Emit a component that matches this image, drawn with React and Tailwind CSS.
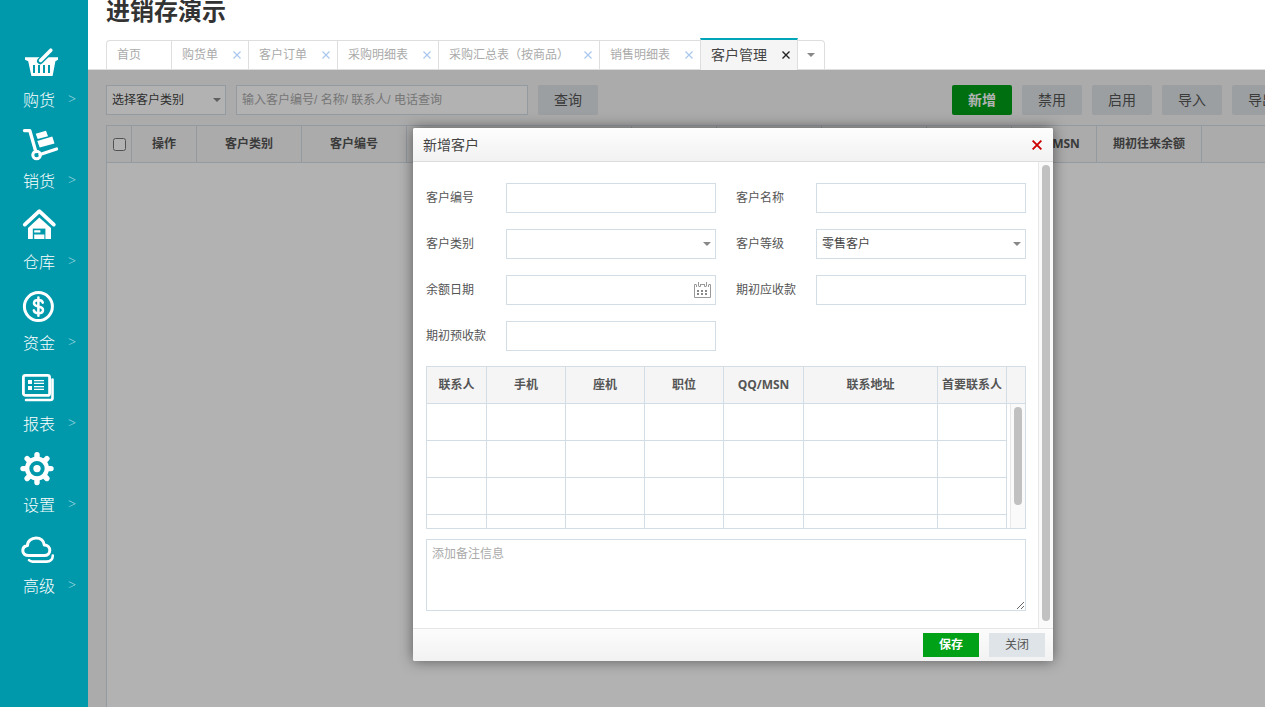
import React, { useState } from "react";

const menus = [
  { name: "购货", icon: "basket" },
  { name: "销货", icon: "trolley" },
  { name: "仓库", icon: "house" },
  { name: "资金", icon: "money" },
  { name: "报表", icon: "report" },
  { name: "设置", icon: "gear" },
  { name: "高级", icon: "cloud" },
];

const tabs = ["购货单", "客户订单", "采购明细表", "采购汇总表（按商品）", "销售明细表"];

const contactColumns = [
  { title: "联系人", width: "w-[60px]" },
  { title: "手机", width: "w-[79px]" },
  { title: "座机", width: "w-[79px]" },
  { title: "职位", width: "w-[79px]" },
  { title: "QQ/MSN", width: "w-[80px]" },
  { title: "联系地址", width: "w-[134px]" },
  { title: "首要联系人", width: "w-[69px]" },
];

const customerColumns = [
  { title: "操作", width: "w-[65px]" },
  { title: "客户类别", width: "w-[105px]" },
  { title: "客户编号", width: "w-[105px]" },
  { title: "", width: "w-[225px]" },
  { title: "", width: "w-[85px]" },
  { title: "", width: "w-[105px]" },
  { title: "", width: "w-[105px]" },
  { title: "", width: "w-[85px]" },
  { title: "QQ/MSN", width: "w-[85px]" },
  { title: "期初往来余额", width: "w-[105px]" },
];

const icons = {
  basket: (
    <>
      <path d="M5 12.300h33v2.400l-2.600 1.600L32.600 31H11.400L8.200 16.300 5 14.700z" fill="#fff" />
      <path d="M14 20v8M19 20v8M24 20v8M29 20v8" stroke="#0099ab" strokeWidth="2" />
      <path d="M31 5.200 20.200 16" stroke="#0099ab" strokeWidth="6.400" strokeLinecap="round" />
      <path d="M30.800 5.200 20.600 15.400" stroke="#fff" strokeWidth="3.600" strokeLinecap="round" />
    </>
  ),
  trolley: (
    <>
      <path d="M4.500 4.600h5.300l6 21" stroke="#fff" strokeWidth="3.400" strokeLinecap="round" strokeLinejoin="round" />
      <path d="M20 28.400 36.600 23" stroke="#fff" strokeWidth="3.200" strokeLinecap="round" />
      <circle cx="16.600" cy="29" r="3.800" stroke="#fff" strokeWidth="3" />
      <path d="m15.700 7.800 10.300-3 2 5.400-10.300 2.700zM17.300 15l15-4.600 2.200 7.200-14.800 4z" fill="#fff" />
    </>
  ),
  house: (
    <>
      <path d="M19.300 10.600 31 21V32H8V21z" fill="#fff" />
      <path d="M4.800 17.600 19.300 4.200 33.800 17.600" stroke="#fff" strokeWidth="3.800" strokeLinecap="round" strokeLinejoin="round" />
      <path d="M12.800 21.600h12.600V32H12.800z" fill="#0099ab" />
      <path d="M14.200 23.200h6.200v2.400h-6.200zM14.200 27.600h10.200V32H14.200z" fill="#fff" />
    </>
  ),
  money: (
    <>
      <circle cx="18.400" cy="18.600" r="14" stroke="#fff" strokeWidth="3" />
      <path
        d="M22.800 14.600c-.5-1.700-2.200-2.500-4.400-2.500-2.600 0-4.400 1.100-4.400 3.200 0 4.500 9 2 9 6.600 0 2.100-1.900 3.300-4.600 3.300-2.400 0-4.100-1-4.600-2.800M18.400 9.600v18.200"
        stroke="#fff"
        strokeWidth="2.500"
        strokeLinecap="round"
      />
    </>
  ),
  report: (
    <>
      <rect x="3.400" y="6.400" width="26.200" height="20" rx="2" stroke="#fff" strokeWidth="2.800" />
      <path d="M6 31h24.500c1.300 0 2-.7 2-2V10.600" stroke="#fff" strokeWidth="2.600" strokeLinecap="round" />
      <path d="M8 11h4v4H8zM8 17h4v4H8z" fill="#fff" />
      <path d="M14 11.600h10M14 14.400h10M14 17.600h10M14 20.400h10" stroke="#fff" strokeWidth="1.200" />
    </>
  ),
  gear: (
    <>
      <path d="M17 4.600v28M3 18.600h28M7.100 8.700l19.800 19.800M26.900 8.700 7.100 28.500" stroke="#fff" strokeWidth="5.400" strokeLinecap="round" />
      <circle cx="17" cy="18.600" r="12" fill="#fff" />
      <circle cx="17" cy="18.600" r="5.700" stroke="#0099ab" strokeWidth="4" />
    </>
  ),
  cloud: (
    <>
      <path
        d="M8.600 24.600C5.200 24.600 2.800 22.600 2.800 19.700c0-2.800 2-4.700 4.700-5.100C7.300 10.200 11.500 6.900 16 6.900c4.600 0 7.900 3 8.300 7.100 3.200 0 5.500 2.200 5.500 5.300s-2.300 5.300-5.500 5.300z"
        stroke="#fff"
        strokeWidth="3"
        strokeLinejoin="round"
      />
      <path d="M9 29.200c1 1 2 1.400 3.500 1.400h14c3.800 0 6.300-2.300 6.300-6.100" stroke="#fff" strokeWidth="2.600" strokeLinecap="round" />
    </>
  ),
};

const Cross = ({ size = 8, width = 1.2 }) => (
  <svg width={size} height={size} viewBox="0 0 8 8" fill="none" stroke="currentColor" strokeWidth={width}>
    <path d="M.5.5l7 7M7.500.500l-7 7" />
  </svg>
);

const Arrow = () => (
  <svg width="8" height="4" viewBox="0 0 8 4" fill="currentColor">
    <path d="M0 0h8L4 4z" />
  </svg>
);

const Scrollbar = ({ thumb }) => (
  <div className="w-[15px] shrink-0 border-l border-[#e8e8e8] bg-[#fafafa] pt-[3px] pl-[3px]">
    <div className={`w-2 rounded-full bg-[#c1c1c1] ${thumb}`}></div>
  </div>
);

const Field = ({ id, label, children }) => (
  <div className="flex">
    <label htmlFor={id} className="w-20 shrink-0 leading-[30px] text-[#555]">
      {label}
    </label>
    <div className="relative min-w-0 flex-1">
      {children || <input id={id} type="text" className="block h-[30px] w-full border border-[#d3dde6] px-[5px] outline-none" />}
    </div>
  </div>
);

const Select = ({ id, label, options }) => (
  <>
    <select id={id} aria-label={label} className="block h-[30px] w-full appearance-none border border-[#d3dde6] bg-white px-[5px] text-[#444] outline-none">
      {options.map((option) => (
        <option key={option}>{option}</option>
      ))}
    </select>
    <span className="pointer-events-none absolute top-[13px] right-[5px] text-[#888]">
      <Arrow />
    </span>
  </>
);

const Sidebar = () => (
  <nav className="w-[88px] shrink-0 bg-[#0099ab] pt-[45px] font-['Noto_Sans_CJK_SC',sans-serif] text-white">
    {menus.map((menu) => (
      <a key={menu.name} href="#" className="block h-[81px] pl-5">
        <svg className="block" width="40" height="36" viewBox="0 0 40 36" fill="none">
          {icons[menu.icon]}
        </svg>
        <span className="flex items-center pt-[6px] pl-[3px] text-base leading-6 font-light">
          {menu.name}
          <span className="ml-[13px] font-['Open_Sans',sans-serif] text-sm text-[#a5dbe2]">&gt;</span>
        </span>
      </a>
    ))}
  </nav>
);

const TabBar = () => (
  <div className="flex items-end border-b border-[#dedede] px-[18px] text-xs text-[#aaa]">
    <button className="h-[29px] w-[65px] rounded-tl-sm border-t border-l border-[#dedede] pl-[10px] text-left">首页</button>
    {tabs.map((tab) => (
      <div key={tab} className="flex h-[29px] items-center border-t border-l border-[#dedede] pr-[7px] pl-[10px]">
        <button className="whitespace-nowrap">{tab}</button>
        <button aria-label="关闭标签" className="ml-[15px] text-[#a9c8ee]">
          <Cross />
        </button>
      </div>
    ))}
    <div className="-mb-px flex h-8 items-center border-x border-t-2 border-x-[#dedede] border-t-[#00a5ba] bg-[#f5f5f5] pr-[7px] pl-[10px] text-sm text-[#444]">
      <button className="whitespace-nowrap">客户管理</button>
      <button aria-label="关闭标签" className="ml-[15px] text-[#222]">
        <Cross width={1.4} />
      </button>
    </div>
    <button aria-label="更多标签" className="flex h-[29px] w-[27px] items-center justify-center rounded-tr-sm border-t border-r border-[#dedede] text-[#888]">
      <Arrow />
    </button>
  </div>
);

const CustomerList = () => (
  <div className="flex flex-1 flex-col px-[18px] pt-[15px]">
    <div className="flex min-w-[1186px] justify-between text-sm">
      <div className="flex gap-[10px]">
        <div className="relative w-[120px] text-xs">
          <Select id="filter" label="客户类别筛选" options={["选择客户类别"]} />
        </div>
        <input
          type="text"
          aria-label="查询条件"
          placeholder="输入客户编号/ 名称/ 联系人/ 电话查询"
          className="h-[30px] w-[292px] border border-[#d3dde6] bg-white px-[5px] text-xs outline-none placeholder:text-[#aaa]"
        />
        <button className="h-[30px] w-[60px] rounded-xs bg-[#dfe4e8] text-[#555]">查询</button>
      </div>
      <div className="flex gap-[10px] text-[#555]">
        <button className="h-[30px] w-[60px] rounded-xs bg-[#00a017] font-bold text-white">新增</button>
        <button className="h-[30px] w-[60px] rounded-xs bg-[#dfe4e8]">禁用</button>
        <button className="h-[30px] w-[60px] rounded-xs bg-[#dfe4e8]">启用</button>
        <button className="h-[30px] w-[60px] rounded-xs bg-[#dfe4e8]">导入</button>
        <button className="h-[30px] w-[60px] rounded-xs bg-[#dfe4e8]">导出</button>
      </div>
    </div>
    <div className="mt-[10px] min-w-[1186px] flex-1 border-l border-[#d3dde6] bg-white">
      <table className="w-full table-fixed border-separate border-spacing-0 font-['Open_Sans','Noto_Sans_CJK_SC',sans-serif] text-[#555]">
        <thead>
          <tr className="h-[38px] bg-[#f5f5f5]">
            <th className="w-[25px] border-y border-r border-[#d3dde6]">
              <input type="checkbox" aria-label="全选" className="mx-auto block size-[13px]" />
            </th>
            {customerColumns.map((column, i) => (
              <th key={i} className={`border-y border-r border-[#d3dde6] ${column.width}`}>
                {column.title}
              </th>
            ))}
            <th className="border-y border-[#d3dde6]"></th>
          </tr>
        </thead>
      </table>
    </div>
  </div>
);

const ContactTable = () => (
  <div className="mt-[15px] border border-[#d3dde6]">
    <table className="w-full table-fixed border-separate border-spacing-0 font-['Open_Sans','Noto_Sans_CJK_SC',sans-serif] text-[#555]">
      <thead>
        <tr className="h-[37px] bg-[#f5f5f5]">
          {contactColumns.map((column) => (
            <th key={column.title} className={`border-r border-b border-[#d3dde6] whitespace-nowrap ${column.width}`}>
              {column.title}
            </th>
          ))}
          <th className="border-b border-[#d3dde6]"></th>
        </tr>
      </thead>
    </table>
    <div className="flex h-[124px] justify-between overflow-hidden">
      <table className="w-[580px] shrink-0 table-fixed border-separate border-spacing-0">
        <tbody>
          {[1, 2, 3, 4].map((row) => (
            <tr key={row} className="h-[37px]">
              {contactColumns.map((column) => (
                <td key={column.title} className={`border-r border-b border-[#d3dde6] ${column.width}`}></td>
              ))}
            </tr>
          ))}
        </tbody>
      </table>
      <Scrollbar thumb="h-[98px]" />
    </div>
  </div>
);

const CustomerDialog = ({ onClose }) => (
  <div role="dialog" aria-labelledby="dialog-title" className="w-[640px] overflow-hidden rounded-xs bg-white shadow-[0_0_14px_rgba(0,0,0,0.5)]">
    <div className="flex h-[34px] items-center justify-between border-b border-[#dcdcdc] bg-linear-to-b from-[#fdfdfd] to-[#f2f2f2] pt-px pr-[11px] pl-[10px]">
      <h2 id="dialog-title" className="text-sm text-[#444]">新增客户</h2>
      <button aria-label="关闭窗口" onClick={onClose} className="text-[#cc0000]">
        <Cross size={10} width={1.5} />
      </button>
    </div>
    <div className="flex">
      <form className="min-w-0 flex-1 pt-[21px] pr-3 pb-[17px] pl-[13px]">
        <div className="grid grid-cols-2 gap-x-5 gap-y-4">
          <Field id="number" label="客户编号" />
          <Field id="name" label="客户名称" />
          <Field id="category" label="客户类别">
            <Select id="category" label="客户类别" options={[""]} />
          </Field>
          <Field id="level" label="客户等级">
            <Select id="level" label="客户等级" options={["零售客户"]} />
          </Field>
          <Field id="date" label="余额日期">
            <input id="date" type="text" className="block h-[30px] w-full border border-[#d3dde6] pr-7 pl-[5px] outline-none" />
            <svg className="pointer-events-none absolute top-[7px] right-[5px]" width="17" height="16" viewBox="0 0 17 16" fill="none">
              <path d="M2 2.500H.5v13h16v-13H15M2.500 5V2.500M4.500 0v4M4.500 4.500h2M6.500 2v2.500M6.500 2.500h4M10.500 2v2.500M10.500 4.500h2M12.500 0v4M14.500 5V2.500" stroke="#999" />
              <path d="M3 8h2v2H3zM7 8h2v2H7zM11 8h2v2h-2zM3 11h2v2H3zM7 11h2v2H7zM11 11h2v2h-2z" fill="#888" />
            </svg>
          </Field>
          <Field id="receivable" label="期初应收款" />
          <Field id="advance" label="期初预收款" />
        </div>
        <ContactTable />
        <textarea
          aria-label="备注"
          placeholder="添加备注信息"
          className="mt-[10px] block h-[72px] w-full resize border border-[#d3dde6] px-[5px] py-[6px] leading-4 outline-none placeholder:text-[#aaa]"
        ></textarea>
      </form>
      <Scrollbar thumb="h-[456px]" />
    </div>
    <div className="flex h-[33px] items-center justify-end gap-[10px] border-t border-[#e5e5e5] bg-linear-to-b from-[#fcfcfc] to-[#f2f2f2] pr-2">
      <button className="h-6 w-14 bg-[#00a017] font-bold text-white">保存</button>
      <button onClick={onClose} className="h-6 w-14 bg-[#dfe4e8] text-[#555]">
        关闭
      </button>
    </div>
  </div>
);

const App = () => {
  const [open, setOpen] = useState(true);

  return (
    <div className="flex min-h-screen bg-white font-['Liberation_Sans','Noto_Sans_CJK_SC',sans-serif] text-xs">
      <Sidebar />
      <main className="flex min-w-0 flex-1 flex-col">
        <header className="flex h-[70px] flex-col justify-end overflow-hidden">
          <h1 className="mb-[14px] px-[18px] text-2xl leading-6 font-bold text-[#333]">进销存演示</h1>
          <TabBar />
        </header>
        <section className="relative flex flex-1 flex-col overflow-hidden bg-[#f5f5f5]">
          <CustomerList />
          {open && (
            <div className="absolute inset-0 bg-black/30 pt-[58px] pl-[325px]">
              <CustomerDialog onClose={() => setOpen(false)} />
            </div>
          )}
        </section>
      </main>
    </div>
  );
};

export default App;
